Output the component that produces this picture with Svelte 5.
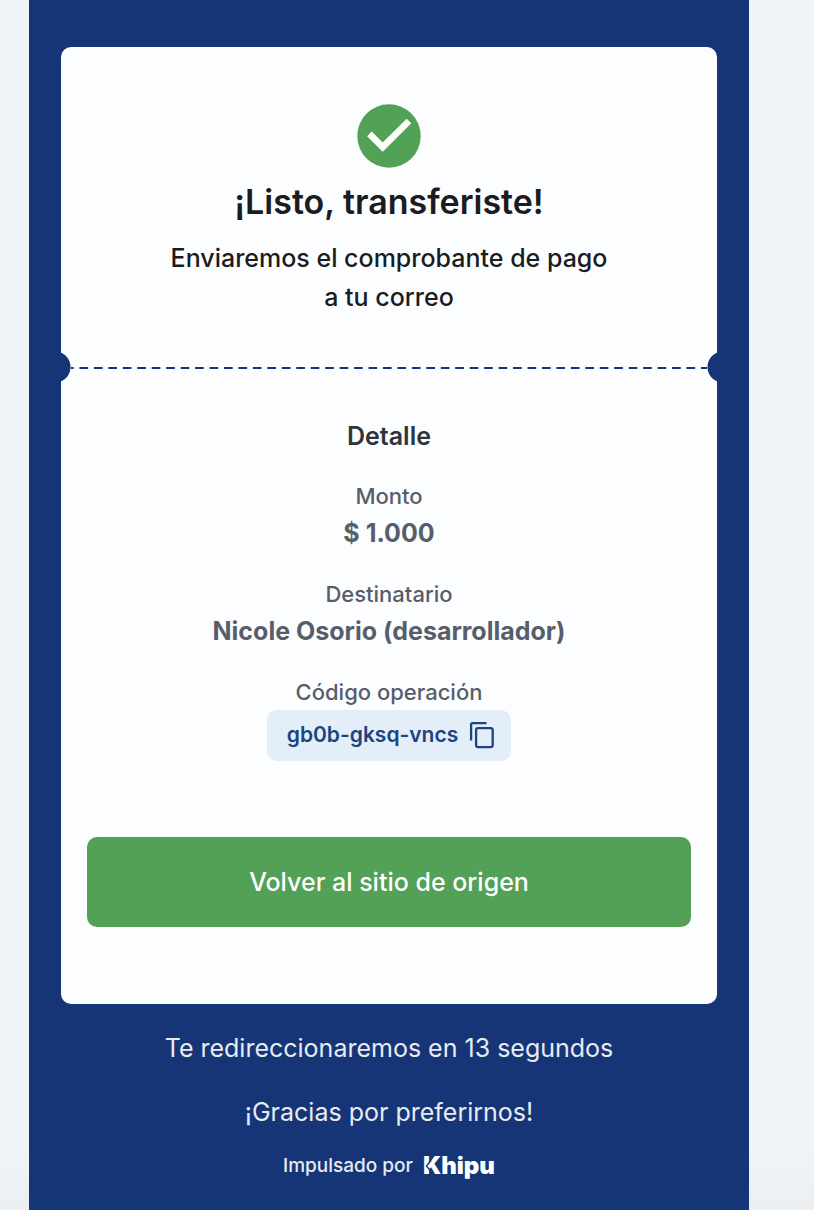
<script>
  const details = [
    { label: 'Monto', value: '$ 1.000' },
    { label: 'Destinatario', value: 'Nicole Osorio (desarrollador)' }
  ];
  const code = 'gb0b-gksq-vncs';
  const seconds = 13;

  function copyCode() {
    navigator.clipboard?.writeText(code);
  }
</script>

<div class="page">
  <main class="panel">
    <article class="card">
      <header class="summary">
        <svg class="check" viewBox="0 0 64 64" aria-hidden="true">
          <circle cx="32" cy="32" r="31.7" fill="#52a157" />
          <path d="M12.4 29.8 25.7 43 52 17" fill="none" stroke="#fff" stroke-width="6.6" />
        </svg>
        <h1>¡Listo, transferiste!</h1>
        <p>Enviaremos el comprobante de pago<br />a tu correo</p>
      </header>

      <div class="divider">
        <span class="notch left"></span>
        <span class="dashes"></span>
        <span class="notch right"></span>
      </div>

      <section class="detail">
        <h2>Detalle</h2>
        <dl>
          {#each details as item}
            <div class="item">
              <dt>{item.label}</dt>
              <dd>{item.value}</dd>
            </div>
          {/each}
          <div class="item">
            <dt>Código operación</dt>
            <dd>
              <button class="code" type="button" onclick={copyCode}>
                <span>{code}</span>
                <svg viewBox="0 0 26 28" fill="none" stroke="#1c4580" stroke-width="2.3" aria-hidden="true">
                  <path d="M2.1 19.5V3.8Q2.1 2.1 3.8 2.1H17.5" />
                  <rect x="7.1" y="7.1" width="16.6" height="19" rx="2" />
                </svg>
              </button>
            </dd>
          </div>
        </dl>
        <button class="back" type="button">Volver al sitio de origen</button>
      </section>
    </article>

    <footer>
      <p>Te redireccionaremos en {seconds} segundos</p>
      <p>¡Gracias por preferirnos!</p>
      <div class="powered">
        <span>Impulsado por</span>
        <strong>
          Khipu
          <svg viewBox="0 0 8 18" fill="none" stroke="#153577" stroke-width="1.3" aria-hidden="true">
            <path d="M7 3.5 2.5 9 7 14.5" />
          </svg>
        </strong>
      </div>
    </footer>
  </main>
</div>

<style>
  :global(body) {
    margin: 0;
    background: #f0f4f8;
  }

  .page {
    box-sizing: border-box;
    min-height: 100vh;
    display: flex;
    padding: 0 65px 0 29px;
    background: linear-gradient(#f0f4f9, #f0f4f8 95%, #ebeff2);
    font-family: Inter, sans-serif;
    text-align: center;
  }

  .panel {
    flex: 1;
    min-width: 0;
    padding: 47px 32px 24px;
    background: #153577;
  }

  .card {
    border-radius: 10px;
    background: #fcfdff;
    overflow: hidden;
  }

  h1, h2, p, dl, dd {
    margin: 0;
  }

  button {
    border: 0;
    font-family: inherit;
    cursor: pointer;
  }

  .summary {
    display: flex;
    flex-direction: column;
    align-items: center;
    padding: 57px 24px 34px;
    color: #1a1c1f;
  }

  .check {
    width: 64px;
    height: 64px;
  }

  h1 {
    margin: 10px 0 13px;
    font-size: 34px;
    font-weight: 600;
    line-height: 48px;
  }

  .summary p {
    font-size: 25px;
    font-weight: 450;
    line-height: 39px;
  }

  .divider {
    display: flex;
    align-items: center;
    justify-content: space-between;
  }

  .notch {
    width: 10px;
    height: 32px;
    background: radial-gradient(circle at var(--cx) 50%, #153577 15px, transparent 16px);
  }

  .left {
    --cx: -6px;
  }

  .right {
    --cx: 16px;
  }

  .dashes {
    flex: 1;
    height: 2px;
    margin-top: 2px;
    background: linear-gradient(90deg, #153577 57%, transparent 57%) -6px 0 / calc(100% / 44) 2px;
  }

  .detail {
    padding: 34px 26px 77px;
    color: #575e69;
  }

  h2 {
    font-size: 25px;
    font-weight: 600;
    line-height: 38px;
    color: #2f343c;
  }

  dl {
    display: flex;
    flex-direction: column;
    gap: 24px;
    margin: 24px 0 76px;
  }

  dt {
    font-size: 22px;
    font-weight: 450;
    line-height: 34px;
  }

  dd {
    font-size: 25px;
    font-weight: 700;
    line-height: 40px;
  }

  .code {
    display: flex;
    align-items: center;
    gap: 11px;
    height: 51px;
    margin: 1px auto 0;
    padding: 0 16px 2px 20px;
    border-radius: 10px;
    background: #e4eef9;
    color: #1c4580;
    font-size: 21px;
    font-weight: 600;
  }

  .code svg {
    width: 26px;
    height: 28px;
  }

  .back {
    display: block;
    width: 100%;
    height: 90px;
    border-radius: 10px;
    background: #52a157;
    color: #fff;
    font-size: 25px;
    font-weight: 500;
  }

  footer {
    display: flex;
    flex-direction: column;
    align-items: center;
    padding-top: 24px;
    color: #e8ebf1;
  }

  footer p {
    margin-bottom: 24px;
    font-size: 25px;
    line-height: 40px;
  }

  .powered {
    display: flex;
    align-items: center;
    gap: 10px;
    margin-top: -4px;
    font-size: 19px;
    font-weight: 500;
    line-height: 28px;
  }

  .powered strong {
    position: relative;
    color: #fff;
    font-size: 24px;
    font-weight: 900;
  }

  .powered svg {
    position: absolute;
    top: 5px;
    left: 1px;
    width: 8px;
    height: 18px;
  }
</style>
